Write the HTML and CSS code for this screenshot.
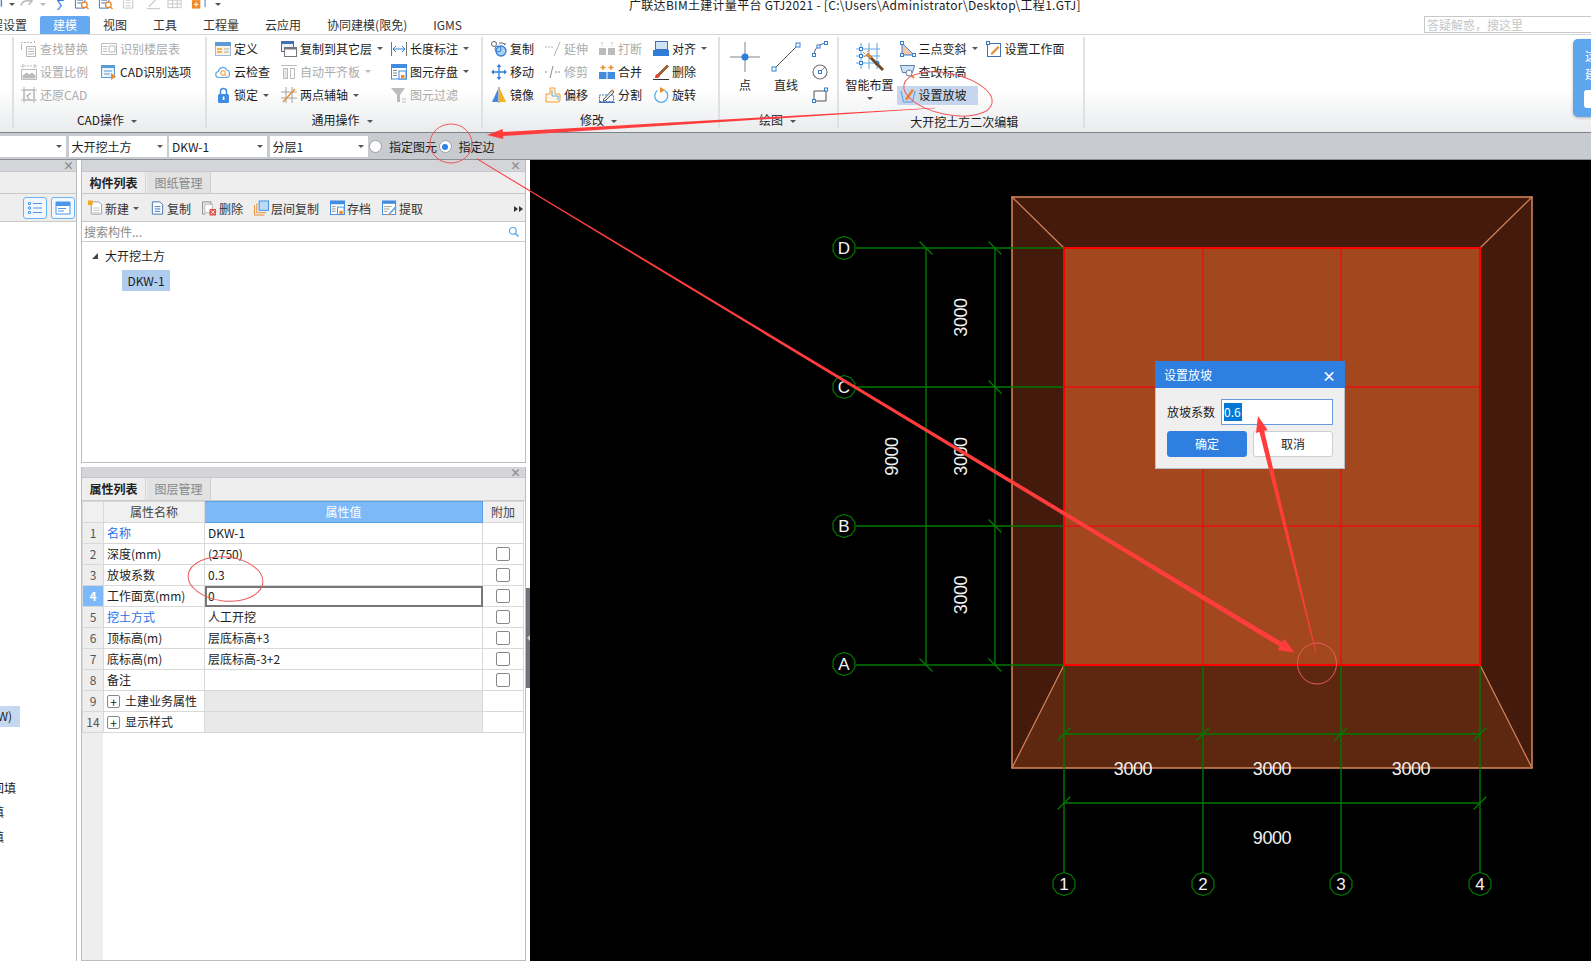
FILE: index.html
```html
<!DOCTYPE html>
<html lang="zh-CN">
<head>
<meta charset="utf-8">
<title>GTJ2021</title>
<link rel="stylesheet" href="styles.css">
</head>
<body>
<svg class="defs" width="0" height="0" aria-hidden="true">
  <symbol id="i-undo" viewBox="0 0 16 16"><path d="M8 2C2 4 2 12 8 14" fill="none" stroke="#3f8ad8" stroke-width="2"/><path d="M10 4v9" stroke="#3f8ad8" stroke-width="1.500"/></symbol>
  <symbol id="i-redo" viewBox="0 0 16 16"><path d="M1 12c1-5 6-6 11-5M9 3l4 4-4 4" fill="none" stroke="#b9b9b9" stroke-width="1.500"/></symbol>
  <symbol id="i-calc" viewBox="0 0 16 16"><path d="M1.500 1.500h10v13h-10z" fill="#fff" stroke="#3f6fb5"/><path d="M3.500 6h6M3.500 9h4" stroke="#3f6fb5"/><circle cx="11" cy="11" r="3" fill="#fff" stroke="#e8872b" stroke-width="1.400"/><path d="M13 13l2.500 2.500" stroke="#e8872b" stroke-width="1.500"/></symbol>
  <symbol id="i-qgray" viewBox="0 0 16 16"><path d="M1.500 1.500h10v13h-10zM4 6h5M4 9h5M4 12h5" fill="none" stroke="#c4c4c4"/></symbol>
  <symbol id="i-qpen" viewBox="0 0 16 16"><path d="M3 13L13 3M1 15h14" fill="none" stroke="#cfcfcf" stroke-width="1.400"/></symbol>
  <symbol id="i-qgrid" viewBox="0 0 16 16"><path d="M1 2h14v12H1zM1 6h14M1 10h14M6 2v12M11 2v12" fill="none" stroke="#c4c4c4"/></symbol>
  <symbol id="i-qadd" viewBox="0 0 16 16"><path d="M3 1.500h12v12" fill="none" stroke="#3f6fb5"/><rect x="1" y="6" width="9" height="9" fill="#f08a24"/><path d="M5.500 8v5M3 10.500h5" stroke="#fff"/></symbol>

  <symbol id="i-find" viewBox="0 0 16 16"><g fill="none" stroke="#b6b6b6"><path d="M0 1.500h11M13.500 0v3" stroke-dasharray="2 1"/><path d="M.5 3v6M5.500 5.500h9v10h-9zM7 8h6M7 10.500h6M7 13h6"/></g></symbol>
  <symbol id="i-floor" viewBox="0 0 16 16"><g fill="none" stroke="#bcbcbc"><path d="M.5 2.500h15v11H.5zM2 5.500h4M2 8h4M2 10.500h4"/><path d="M8 5h6v6H8z"/></g></symbol>
  <symbol id="i-scale" viewBox="0 0 16 16"><path d="M0 2h16" stroke="#bcbcbc" stroke-dasharray="2 1"/><path d="M2 0v4M14 0v4" stroke="#bcbcbc"/><path d="M.5 5.500h15v10H.5z" fill="none" stroke="#bcbcbc"/><path d="M1.500 14.500v-3l4-3 3 2 2.500-2 3.500 3v3z" fill="#bcbcbc"/></symbol>
  <symbol id="i-cad" viewBox="0 0 16 16"><path d="M.5 1.500h13v12H.5z" fill="#eaf3fc" stroke="#5b9bd5"/><rect y="1" width="14" height="3" fill="#5b9bd5"/><path d="M3 7h8M3 10h6" stroke="#5b9bd5"/><path d="M10 9l5 3.500-5 3.500z" fill="#f08a24"/></symbol>
  <symbol id="i-restore" viewBox="0 0 16 16"><g fill="none" stroke="#b6b6b6"><path d="M3 3h10v10H3zM0 3h16M3 0v16M13 0v16M0 13h16"/><path d="M10 6L6 9l2 3" stroke-width="1.300"/></g></symbol>
  <symbol id="i-def" viewBox="0 0 16 16"><rect x=".5" y="1.500" width="15" height="13" fill="#fdf3e2" stroke="#9db8d8"/><rect y="1" width="16" height="4" fill="#5b9bd5"/><path d="M2 8h5M2 11h5" stroke="#f0a030" stroke-width="1.500"/><path d="M9 8h5M9 11h5" stroke="#a9a9a9"/></symbol>
  <symbol id="i-cloud" viewBox="0 0 16 16"><path d="M4 13.500C0 13.500-.5 8 3.500 7.500 4 3 10 2 11.500 6c3.500 0 4.500 7.500 0 7.500z" fill="#fff" stroke="#5aa7e8" stroke-width="1.200"/><circle cx="8" cy="9" r="2.300" fill="none" stroke="#f08a24"/><path d="M9.500 10.500l2 2" stroke="#f08a24"/></symbol>
  <symbol id="i-lock" viewBox="0 0 16 16"><rect x="3" y="7" width="11" height="9" rx="1.500" fill="#3f8ce0"/><path d="M5.500 7V4.500a3 3 0 0 1 6 0V7" fill="none" stroke="#3f8ce0" stroke-width="1.500"/><rect x="7.800" y="9.500" width="1.600" height="3.500" fill="#fff"/></symbol>
  <symbol id="i-copyto" viewBox="0 0 16 16"><rect x=".5" y=".5" width="12" height="10" fill="#eaf3fc" stroke="#3f6fb5"/><rect width="13" height="3" fill="#3f6fb5"/><rect x="3.500" y="6.500" width="12" height="9" fill="#fff" stroke="#777"/><rect x="3" y="6" width="13" height="2.500" fill="#777"/></symbol>
  <symbol id="i-flat" viewBox="0 0 16 16"><path d="M0 1.500h16" stroke="#bcbcbc"/><rect x="2.500" y="4.500" width="4" height="10" fill="#e6e6e6" stroke="#bcbcbc"/><rect x="9.500" y="4.500" width="4" height="10" fill="#fff" stroke="#bcbcbc"/></symbol>
  <symbol id="i-axis" viewBox="0 0 16 16"><path d="M0 5h16M0 11h16M5 0v16M11 0v16" stroke="#9a9a9a" stroke-width=".9"/><path d="M2 15L14 2" stroke="#e8872b" stroke-width="1.300"/></symbol>
  <symbol id="i-len" viewBox="0 0 16 16"><path d="M.5 1v14M15.500 1v14" stroke="#777"/><path d="M2 8h12" stroke="#2f7fd8"/><path d="M5 5L2 8l3 3M11 5l3 3-3 3" fill="none" stroke="#2f7fd8"/></symbol>
  <symbol id="i-save" viewBox="0 0 16 16"><rect x=".5" y="1" width="15" height="14" fill="#fff" stroke="#3f8ce0"/><rect width="16" height="4" fill="#3f8ce0"/><path d="M2 6.500h4M2 9h4M2 11.500h4" stroke="#888"/><rect x="8" y="7" width="7" height="8" fill="#fff" stroke="#3f8ce0"/><rect x="10" y="11" width="3.500" height="3.500" fill="#f08a24"/></symbol>
  <symbol id="i-filter" viewBox="0 0 16 16"><path d="M0 1h14L9 8v7H6V8z" fill="#bcbcbc"/><path d="M11 12h4M11 15h4" stroke="#bcbcbc"/></symbol>
  <symbol id="i-copy" viewBox="0 0 16 16"><circle cx="3" cy="3" r="2.500" fill="#fff" stroke="#666"/><path d="M8 2h4l2 2M14 2v2" fill="none" stroke="#666"/><circle cx="10" cy="10" r="5" fill="#a9d0f2" stroke="#2f7fd8" stroke-width="1.300"/><circle cx="7" cy="8" r="3" fill="none" stroke="#2f7fd8"/></symbol>
  <symbol id="i-extend" viewBox="0 0 16 16"><path d="M0 6h8" stroke="#b6b6b6" stroke-dasharray="2 1"/><path d="M9 15L15 1" stroke="#b6b6b6"/></symbol>
  <symbol id="i-break" viewBox="0 0 16 16"><path d="M3 1v4M13 1v4" stroke="#bbb" stroke-dasharray="2 1"/><rect y="7" width="7" height="7" fill="#bbb"/><rect x="9" y="7" width="7" height="7" fill="#bbb"/></symbol>
  <symbol id="i-align" viewBox="0 0 16 16"><rect x="2.500" y=".5" width="12" height="8" fill="#cfe3f8" stroke="#3f6fb5"/><rect y="9" width="16" height="6" fill="#2f7fd8"/></symbol>
  <symbol id="i-move" viewBox="0 0 16 16"><path d="M8 3v10M3 8h10" stroke="#2f7fd8" stroke-width="1.300"/><path d="M8 0l2.500 3h-5zM8 16l2.500-3h-5zM0 8l3-2.500v5zM16 8l-3-2.500v5z" fill="#2f7fd8"/></symbol>
  <symbol id="i-trim" viewBox="0 0 16 16"><path d="M5 14L8 2" stroke="#8a8a8a"/><path d="M0 8h3M10 8h6" stroke="#8a8a8a" stroke-dasharray="2 1"/></symbol>
  <symbol id="i-merge" viewBox="0 0 16 16"><path d="M4 1v5M1.500 3.500h5M12 1v5M9.500 3.500h5" stroke="#f08a24" stroke-width="1.300"/><rect y="8" width="7.500" height="7" fill="#3f8ce0"/><rect x="8.500" y="8" width="7.500" height="7" fill="#3f8ce0"/></symbol>
  <symbol id="i-del" viewBox="0 0 16 16"><path d="M5 10L14 1l1.500 1.500-9 9z" fill="#a8642c" stroke="#6e3f18" stroke-width=".7"/><path d="M2 14c0-3 1.500-4.500 3.500-4l1.500 1.500c0 2-2 2.500-5 2.500z" fill="#d9472b"/><path d="M0 15.500h16" stroke="#333"/></symbol>
  <symbol id="i-mirror" viewBox="0 0 16 16"><path d="M7 2L1 15h6z" fill="#3f8ce0"/><path d="M9 2l6 13H9z" fill="#f5b21a"/><path d="M8 0v16" stroke="#777"/></symbol>
  <symbol id="i-offset" viewBox="0 0 16 16"><path d="M5 1h5v6h5v6a2 2 0 0 1-2 2H1v-8h4z" fill="#fdf6e6" stroke="#f0a030"/><path d="M7 3v6h6v4" fill="none" stroke="#5aa7e8"/></symbol>
  <symbol id="i-split" viewBox="0 0 16 16"><path d="M.5 14.500V8h14v6.500z" fill="none" stroke="#3f6fb5" stroke-dasharray="2 1"/><path d="M0 15.500h16" stroke="#3f6fb5"/><path d="M4 13L13 3l2 2-9 9z" fill="#e9e9e9" stroke="#555"/><path d="M12 4l1-2 2 2-2 1z" fill="#e8872b"/></symbol>
  <symbol id="i-rotate" viewBox="0 0 16 16"><path d="M4.500 3.500a6.500 6.500 0 1 0 7-.3" fill="none" stroke="#5aa7e8" stroke-width="1.300"/><path d="M7 0l5 3-5 3z" fill="#f08a24"/></symbol>
  <symbol id="i-point" viewBox="0 0 30 30"><path d="M15 0v30M0 15h30" stroke="#7a8795"/><circle cx="15" cy="15" r="3.500" fill="#2f7fd8"/></symbol>
  <symbol id="i-line" viewBox="0 0 30 30"><path d="M3 27L27 3" stroke="#555"/><rect x="1" y="25" width="4" height="4" fill="#fff" stroke="#2f7fd8"/><rect x="25" y="1" width="4" height="4" fill="#fff" stroke="#2f7fd8"/></symbol>
  <symbol id="i-arc" viewBox="0 0 16 16"><path d="M2 14C2 8 7 3 14 2" fill="none" stroke="#555"/><rect x=".5" y="12.500" width="3" height="3" fill="#fff" stroke="#2f7fd8"/><rect x="12.500" y=".5" width="3" height="3" fill="#fff" stroke="#2f7fd8"/><rect x="5" y="4" width="3" height="3" fill="#fff" stroke="#2f7fd8"/></symbol>
  <symbol id="i-circle" viewBox="0 0 16 16"><circle cx="8" cy="8" r="7" fill="#fff" stroke="#777" stroke-width="1.200"/><rect x="6.500" y="6.500" width="3" height="3" fill="#fff" stroke="#2f7fd8"/><path d="M9 7l4-4" stroke="#777"/></symbol>
  <symbol id="i-rect" viewBox="0 0 16 16"><path d="M2 4h12v10H2z" fill="none" stroke="#555"/><rect x="12.500" y="1" width="3" height="3" fill="#fff" stroke="#2f7fd8"/><rect x=".5" y="12.500" width="3" height="3" fill="#fff" stroke="#2f7fd8"/></symbol>
  <symbol id="i-smart" viewBox="0 0 30 30"><path d="M1 7h24M1 14h24M1 21h24M6 1v26M14 1v26M22 1v26" stroke="#5aa7e8"/><g fill="#fff" stroke="#2f7fd8"><rect x="4.500" y="5.500" width="3" height="3"/><rect x="4.500" y="12.500" width="3" height="3"/><rect x="4.500" y="19.500" width="3" height="3"/><rect x="20.500" y="19.500" width="3" height="3"/></g><path d="M12 12l16 16" stroke="#6b4a2a" stroke-width="3"/><path d="M12 12l4 4" stroke="#e8872b" stroke-width="3"/><path d="M8 10l2 2M14 8l-2 2M9 15l2-2" stroke="#e8872b"/></symbol>
  <symbol id="i-slope3" viewBox="0 0 16 16"><path d="M2 2v12h12z" fill="#f6c6a6" stroke="#2f7fd8"/><rect x=".5" y=".5" width="3" height="3" fill="#fff" stroke="#2f7fd8"/><rect x=".5" y="12.500" width="3" height="3" fill="#fff" stroke="#2f7fd8"/><rect x="12.500" y="12.500" width="3" height="3" fill="#fff" stroke="#2f7fd8"/></symbol>
  <symbol id="i-plane" viewBox="0 0 16 16"><rect x="1.500" y="2.500" width="13" height="13" fill="#fff" stroke="#3f6fb5"/><rect x=".5" y=".5" width="3" height="3" fill="#fff" stroke="#3f6fb5"/><path d="M5 12l7-7 1.500 1.500-7 7H5z" fill="#e8872b"/></symbol>
  <symbol id="i-level" viewBox="0 0 16 16"><path d="M.5 1.500h14l-2 7h-10z" fill="#cfe3f8" stroke="#5b7fa8"/><circle cx="9" cy="9" r="3" fill="#fff" stroke="#5b7fa8"/><path d="M11 11l3 3" stroke="#f08a24" stroke-width="2"/></symbol>
  <symbol id="i-slope" viewBox="0 0 16 16"><path d="M1 4l2.500 11h9L15 4" fill="none" stroke="#5b9bd5"/><path d="M5 12L12 2l2 1.500-7 10z" fill="#e8872b"/></symbol>
  <symbol id="i-new" viewBox="0 0 16 16"><path d="M3.500 1.500h8l3 3v10h-11z" fill="#fff" stroke="#9a9a9a"/><path d="M5.500 8h7M5.500 10.500h7M5.500 13h7" stroke="#c4c4c4"/><rect width="5" height="5" fill="#f5a623"/></symbol>
  <symbol id="i-cpy" viewBox="0 0 16 16"><path d="M2.500 1.500h8l3 3v10h-11z" fill="#fff" stroke="#3f6fb5"/><path d="M5 6.500h6M5 9h6M5 11.500h6" stroke="#3f6fb5"/></symbol>
  <symbol id="i-rm" viewBox="0 0 16 16"><path d="M3.500 14.500h-3v-13h9V7" fill="none" stroke="#8a8a8a"/><rect x="3" y="4" width="8" height="9" fill="#fff" stroke="#b5b5b5"/><rect x="8" y="9" width="7" height="7" fill="#e2504a"/><path d="M9.500 10.500l4 4M13.500 10.500l-4 4" stroke="#fff"/></symbol>
  <symbol id="i-lcopy" viewBox="0 0 16 16"><path d="M.5 5v10.500H11M3 3v10h10" fill="none" stroke="#e8872b"/><rect x="5.500" y=".5" width="10" height="10" fill="#bcd9f6" stroke="#3f8ce0"/></symbol>
  <symbol id="i-pull" viewBox="0 0 16 16"><rect x=".5" y="1" width="14" height="14" fill="#fff" stroke="#3f8ce0"/><rect width="15" height="3.500" fill="#3f8ce0"/><path d="M2 6.500h8M2 9h6M2 11.500h4" stroke="#999"/><path d="M7 14l7-8 1.500 1.500-7 7.500z" fill="#5aa7e8"/><path d="M5 15h5" stroke="#e8872b"/></symbol>
  <symbol id="i-search" viewBox="0 0 16 16"><circle cx="6.500" cy="6.500" r="4.500" fill="none" stroke="#5aa7e8" stroke-width="1.600"/><path d="M10 10l4 4" stroke="#5aa7e8" stroke-width="2"/></symbol>
  <symbol id="i-listv" viewBox="0 0 16 16"><path d="M1.500 2.500h2v2h-2zM1.500 7h2v2h-2zM1.500 11.500h2v2h-2z" fill="none" stroke="#4a97e8"/><path d="M6 3.500h9M6 8h9M6 12.500h9" stroke="#4a97e8"/></symbol>
  <symbol id="i-formv" viewBox="0 0 16 16"><path d="M1 2h14v12H1z" fill="#fff" stroke="#4a97e8"/><rect x="1" y="2" width="14" height="4" fill="#4a97e8"/><path d="M3 8.500h8M3 11h6" stroke="#4a97e8"/></symbol>
  <symbol id="axis-bubble" viewBox="-12 -12 24 24"><polygon points="0,-11.500 6.760,-9.300 10.940,-3.550 10.940,3.550 6.760,9.300 0,11.500 -6.760,9.300 -10.940,3.550 -10.940,-3.550 -6.760,-9.300" fill="#000" stroke="#007a00" stroke-width="1.200"/></symbol>
</svg>

<header class="titlebar">
  <div class="quick">
    <svg class="q q-undo"><use href="#i-undo"/></svg><i class="qcaret"></i>
    <svg class="q q-redo"><use href="#i-redo"/></svg><i class="qcaret light"></i>
    <span class="sigma">Σ</span>
    <svg class="q"><use href="#i-calc"/></svg>
    <svg class="q"><use href="#i-calc"/></svg>
    <svg class="q"><use href="#i-qgray"/></svg>
    <svg class="q q-tight"><use href="#i-qpen"/></svg>
    <svg class="q"><use href="#i-qgrid"/></svg>
    <svg class="q"><use href="#i-qadd"/></svg>
    <i class="qcaret"></i>
  </div>
  <div class="apptitle">广联达BIM土建计量平台 GTJ2021 - [C:\Users\Administrator\Desktop\工程1.GTJ]</div>
</header>

<nav class="tabbar">
  <span class="mtab first">工程设置</span>
  <span class="mtab on">建模</span>
  <span class="mtab">视图</span>
  <span class="mtab">工具</span>
  <span class="mtab">工程量</span>
  <span class="mtab">云应用</span>
  <span class="mtab">协同建模(限免)</span>
  <span class="mtab">IGMS</span>
  <div class="helpbox">答疑解惑，搜这里</div>
</nav>

<section class="ribbon">
  <div class="group g-cad">
    <div class="cols">
      <div class="col">
        <div class="item off"><svg class="ic"><use href="#i-find"/></svg>查找替换</div>
        <div class="item off"><svg class="ic"><use href="#i-scale"/></svg>设置比例</div>
        <div class="item off"><svg class="ic"><use href="#i-restore"/></svg>还原CAD</div>
      </div>
      <div class="col">
        <div class="item off"><svg class="ic"><use href="#i-floor"/></svg>识别楼层表</div>
        <div class="item"><svg class="ic"><use href="#i-cad"/></svg>CAD识别选项</div>
      </div>
    </div>
    <div class="glabel">CAD操作<i class="caret"></i></div>
  </div>
  <div class="group g-common">
    <div class="cols">
      <div class="col">
        <div class="item"><svg class="ic"><use href="#i-def"/></svg>定义</div>
        <div class="item"><svg class="ic"><use href="#i-cloud"/></svg>云检查</div>
        <div class="item"><svg class="ic"><use href="#i-lock"/></svg>锁定<i class="caret"></i></div>
      </div>
      <div class="col">
        <div class="item"><svg class="ic"><use href="#i-copyto"/></svg>复制到其它层<i class="caret"></i></div>
        <div class="item off"><svg class="ic"><use href="#i-flat"/></svg>自动平齐板<i class="caret"></i></div>
        <div class="item"><svg class="ic"><use href="#i-axis"/></svg>两点辅轴<i class="caret"></i></div>
      </div>
      <div class="col">
        <div class="item"><svg class="ic"><use href="#i-len"/></svg>长度标注<i class="caret"></i></div>
        <div class="item"><svg class="ic"><use href="#i-save"/></svg>图元存盘<i class="caret"></i></div>
        <div class="item off"><svg class="ic"><use href="#i-filter"/></svg>图元过滤</div>
      </div>
    </div>
    <div class="glabel">通用操作<i class="caret"></i></div>
  </div>
  <div class="group g-modify">
    <div class="cols">
      <div class="col">
        <div class="item"><svg class="ic"><use href="#i-copy"/></svg>复制</div>
        <div class="item"><svg class="ic"><use href="#i-move"/></svg>移动</div>
        <div class="item"><svg class="ic"><use href="#i-mirror"/></svg>镜像</div>
      </div>
      <div class="col">
        <div class="item off"><svg class="ic"><use href="#i-extend"/></svg>延伸</div>
        <div class="item off"><svg class="ic"><use href="#i-trim"/></svg>修剪</div>
        <div class="item"><svg class="ic"><use href="#i-offset"/></svg>偏移</div>
      </div>
      <div class="col">
        <div class="item off"><svg class="ic"><use href="#i-break"/></svg>打断</div>
        <div class="item"><svg class="ic"><use href="#i-merge"/></svg>合并</div>
        <div class="item"><svg class="ic"><use href="#i-split"/></svg>分割</div>
      </div>
      <div class="col">
        <div class="item"><svg class="ic"><use href="#i-align"/></svg>对齐<i class="caret"></i></div>
        <div class="item"><svg class="ic"><use href="#i-del"/></svg>删除</div>
        <div class="item"><svg class="ic"><use href="#i-rotate"/></svg>旋转</div>
      </div>
    </div>
    <div class="glabel">修改<i class="caret"></i></div>
  </div>
  <div class="group g-draw">
    <div class="cols">
      <div class="big"><svg class="bigic"><use href="#i-point"/></svg><span>点</span></div>
      <div class="big"><svg class="bigic"><use href="#i-line"/></svg><span>直线</span></div>
      <div class="col">
        <div class="item"><svg class="ic"><use href="#i-arc"/></svg></div>
        <div class="item"><svg class="ic"><use href="#i-circle"/></svg></div>
        <div class="item"><svg class="ic"><use href="#i-rect"/></svg></div>
      </div>
    </div>
    <div class="glabel">绘图<i class="caret"></i></div>
  </div>
  <div class="group g-edit">
    <div class="cols">
      <div class="big wide"><svg class="bigic"><use href="#i-smart"/></svg><span>智能布置</span><i class="caret"></i></div>
      <div class="col col-sel">
        <div class="item"><svg class="ic"><use href="#i-slope3"/></svg>三点变斜<i class="caret"></i></div>
        <div class="item"><svg class="ic"><use href="#i-level"/></svg>查改标高</div>
        <div class="item sel"><svg class="ic"><use href="#i-slope"/></svg>设置放坡</div>
      </div>
      <div class="col">
        <div class="item"><svg class="ic"><use href="#i-plane"/></svg>设置工作面</div>
      </div>
    </div>
    <div class="glabel low">大开挖土方二次编辑</div>
  </div>
  <aside class="promo">
    <span>这</span><span>建</span>
    <b class="promo-btn"></b>
  </aside>
</section>

<section class="optbar">
  <div class="combo c0"><i class="caret"></i></div>
  <div class="combo"><span>大开挖土方</span><i class="caret"></i></div>
  <div class="combo"><span>DKW-1</span><i class="caret"></i></div>
  <div class="combo"><span>分层1</span><i class="caret"></i></div>
  <label class="radio r1"><i class="dot"></i><span>指定图元</span></label>
  <label class="radio r2"><i class="dot on"></i><span>指定边</span></label>
</section>

<main class="main">
  <aside class="leftpane">
    <div class="ptitle"><b class="px">×</b></div>
    <div class="lband"></div>
    <div class="ltools">
      <span class="vbtn"><svg class="vic"><use href="#i-listv"/></svg></span>
      <span class="vbtn"><svg class="vic"><use href="#i-formv"/></svg></span>
    </div>
    <div class="llist">
      <div class="lrow hi"><span>大开挖土方(DKW)</span></div>
      <div class="lrow l2"><span>大开挖灰土回填</span></div>
      <div class="lrow l3"><span>基槽灰土回填</span></div>
      <div class="lrow l3"><span>基坑灰土回填</span></div>
    </div>
  </aside>

  <div class="midpane">
    <section class="panel upper">
      <div class="ptitle"><b class="px">×</b></div>
      <div class="ptabs"><span class="ptab on">构件列表</span><span class="ptab">图纸管理</span></div>
      <div class="ptools">
        <span class="tool"><svg class="tic"><use href="#i-new"/></svg>新建<i class="caret"></i></span>
        <span class="tool"><svg class="tic"><use href="#i-cpy"/></svg>复制</span>
        <span class="tool"><svg class="tic"><use href="#i-rm"/></svg>删除</span>
        <span class="tool"><svg class="tic"><use href="#i-lcopy"/></svg>层间复制</span>
        <span class="tool"><svg class="tic"><use href="#i-save"/></svg>存档</span>
        <span class="tool"><svg class="tic"><use href="#i-pull"/></svg>提取</span>
        <span class="more"></span>
      </div>
      <div class="psearch"><span>搜索构件...</span><svg class="sic"><use href="#i-search"/></svg></div>
      <div class="tree">
        <div class="tnode"><i class="tri"></i>大开挖土方</div>
        <div class="tleaf">DKW-1</div>
      </div>
    </section>
    <section class="panel lower">
      <div class="ptitle short"><b class="px">×</b></div>
      <div class="ptabs tall"><span class="ptab on">属性列表</span><span class="ptab">图层管理</span></div>
      <div class="propwrap">
        <table class="props">
          <colgroup><col class="c-n"><col class="c-k"><col class="c-v"><col class="c-a"></colgroup>
          <thead>
            <tr><th></th><th>属性名称</th><th class="hv">属性值</th><th>附加</th></tr>
          </thead>
          <tbody>
            <tr><td class="n">1</td><td class="k link">名称</td><td class="v">DKW-1</td><td class="a"></td></tr>
            <tr><td class="n">2</td><td class="k">深度(mm)</td><td class="v">(2750)</td><td class="a"><i class="chk"></i></td></tr>
            <tr><td class="n">3</td><td class="k">放坡系数</td><td class="v">0.3</td><td class="a"><i class="chk"></i></td></tr>
            <tr><td class="n act">4</td><td class="k">工作面宽(mm)</td><td class="v edit">0</td><td class="a"><i class="chk"></i></td></tr>
            <tr><td class="n">5</td><td class="k link">挖土方式</td><td class="v">人工开挖</td><td class="a"><i class="chk"></i></td></tr>
            <tr><td class="n">6</td><td class="k">顶标高(m)</td><td class="v">层底标高+3</td><td class="a"><i class="chk"></i></td></tr>
            <tr><td class="n">7</td><td class="k">底标高(m)</td><td class="v">层底标高-3+2</td><td class="a"><i class="chk"></i></td></tr>
            <tr><td class="n">8</td><td class="k">备注</td><td class="v"></td><td class="a"><i class="chk"></i></td></tr>
            <tr><td class="n">9</td><td class="k"><span class="grp"><i class="plus">+</i>土建业务属性</span></td><td class="v shade"></td><td class="a"></td></tr>
            <tr><td class="n">14</td><td class="k"><span class="grp"><i class="plus">+</i>显示样式</span></td><td class="v shade"></td><td class="a"></td></tr>
          </tbody>
        </table>
      </div>
    </section>
  </div>

  <div class="splitter"><span class="thumb"></span></div>

  <div class="viewport">
    <svg class="drawing" viewBox="530 160 1061 801">
      <rect x="1012" y="197" width="520" height="571" fill="#431a0c"/>
      <polygon points="1012,768 1532,768 1480,665 1064,665" fill="#5e2810"/>
      <rect x="1064" y="248" width="416" height="417" fill="#a3481e"/>
      <path d="M1012 197L1064 248M1532 197L1480 248M1012 768L1064 665M1532 768L1480 665" stroke="#d08058" stroke-width="1.300" fill="none"/>
      <rect x="1012" y="197" width="520" height="571" fill="none" stroke="#d08058" stroke-width="1.600"/>
      <g stroke="#007a00" stroke-width="1.400" fill="none">
        <path d="M856 248H1064M856 387H1064M856 526H1064M856 665H1064"/>
        <path d="M1064 665V872M1203 665V872M1341 665V872M1480 665V872"/>
        <path d="M926 248V665M995 248V665"/>
        <path d="M919.500 241.500L932.500 254.500M919.500 658.500L932.500 671.500"/>
        <path d="M988.500 241.500L1001.500 254.500M988.500 380.500L1001.500 393.500M988.500 519.500L1001.500 532.500M988.500 658.500L1001.500 671.500"/>
        <path d="M1064 734H1480M1064 803H1480"/>
        <path d="M1057.500 740.500L1070.500 727.500M1196.500 740.500L1209.500 727.500M1334.500 740.500L1347.500 727.500M1473.500 740.500L1486.500 727.500"/>
        <path d="M1057.500 809.500L1070.500 796.500M1473.500 809.500L1486.500 796.500"/>
      </g>
      <g stroke="#e81010" stroke-width="1.400" fill="none">
        <path d="M1064 387H1480M1064 526H1480M1203 248V665M1341 248V665"/>
      </g>
      <rect x="1064" y="248" width="416" height="417" fill="none" stroke="#ff0000" stroke-width="2"/>
      <use href="#axis-bubble" x="832" y="236" width="24" height="24"/>
      <use href="#axis-bubble" x="832" y="375" width="24" height="24"/>
      <use href="#axis-bubble" x="832" y="514" width="24" height="24"/>
      <use href="#axis-bubble" x="832" y="652" width="24" height="24"/>
      <use href="#axis-bubble" x="1052" y="872" width="24" height="24"/>
      <use href="#axis-bubble" x="1191" y="872" width="24" height="24"/>
      <use href="#axis-bubble" x="1329" y="872" width="24" height="24"/>
      <use href="#axis-bubble" x="1468" y="872" width="24" height="24"/>
      <g class="cadtext bubble">
        <text x="844" y="254">D</text>
        <text x="844" y="393">C</text>
        <text x="844" y="532">B</text>
        <text x="844" y="670">A</text>
        <text x="1064" y="890">1</text>
        <text x="1203" y="890">2</text>
        <text x="1341" y="890">3</text>
        <text x="1480" y="890">4</text>
      </g>
      <g class="cadtext">
        <text x="1133" y="775">3000</text>
        <text x="1272" y="775">3000</text>
        <text x="1411" y="775">3000</text>
        <text x="1272" y="844">9000</text>
        <text transform="translate(967 317.500) rotate(-90)">3000</text>
        <text transform="translate(967 456.500) rotate(-90)">3000</text>
        <text transform="translate(967 595) rotate(-90)">3000</text>
        <text transform="translate(898 456.500) rotate(-90)">9000</text>
      </g>
    </svg>
    <div class="dialog">
      <div class="dtitle"><span>设置放坡</span><b>×</b></div>
      <div class="dbody">
        <div class="dfield"><span>放坡系数</span><div class="dinput"><span class="seltext">0.6</span></div></div>
        <div class="dbtns"><span class="dbtn ok">确定</span><span class="dbtn">取消</span></div>
      </div>
    </div>
  </div>
</main>

<svg class="marks" width="1591" height="961" viewBox="0 0 1591 961">
  <g fill="none" stroke="#ee5a5a" stroke-width="1">
    <ellipse cx="451" cy="143.500" rx="21" ry="19.500"/>
    <ellipse cx="948" cy="94" rx="45" ry="20.500" transform="rotate(12 948 94)"/>
    <ellipse cx="225.500" cy="579" rx="37.500" ry="22" transform="rotate(6 225.500 579)"/>
    <ellipse cx="1317" cy="663.500" rx="19.500" ry="20.500"/>
  </g>
  <g fill="#ff3d3d">
    <polygon points="477,158.300 1282.200,642.300 1284.300,638.800 1294.600,652.700 1277.500,650 1279.600,646.500 476.400,159.100"/>
    <polygon points="935,107.700 502.900,132 502.700,129 487,135 503.300,139 503.100,136 935,108.300"/>
    <polygon points="1316.400,652.900 1264.200,430.900 1267.600,430.100 1258,416 1256,432.900 1259.400,432.100 1315.600,653.100"/>
  </g>
</svg>
</body>
</html>
```

FILE: styles.css
```css
* { box-sizing: border-box; }
html, body { margin: 0; padding: 0; }
body {
  position: relative;
  width: 1591px;
  height: 961px;
  overflow: hidden;
  background: #fff;
  color: #1c1c1c;
  font: 12px/16px "Noto Sans CJK SC", "Noto Sans", sans-serif;
  display: flex;
  flex-direction: column;
}
i, b { font-style: normal; }
.defs { position: absolute; }

/* title */
.titlebar { height: 16px; flex: none; display: flex; overflow: hidden; }
.quick { width: 629px; flex: none; display: flex; align-items: flex-start; height: 10px; overflow: hidden; }
.q { width: 15px; height: 16px; flex: none; margin: -6px 9px 0 0; }
.q-tight { margin-right: 6px; }
.q-undo { margin-left: -8px; margin-right: 2px; }
.q-redo { margin-left: 5px; margin-right: 5px; }
.qcaret { width: 0; height: 0; border: 3.500px solid transparent; border-top: 3.500px solid #555; border-bottom: 0; margin: 3px 0 0 0; flex: none; }
.qcaret.light { border-top-color: #b9b9b9; }
.sigma { width: 15px; flex: none; margin: 0 6px 0 7px; font-size: 14px; line-height: 10px; color: #2f7fd8; text-align: center; }
.apptitle { font-size: 12px; line-height: 10px; white-space: nowrap; letter-spacing: .025em; }

/* main tabs */
.tabbar { height: 19px; flex: none; display: flex; align-items: flex-start; border-bottom: 1px solid #d6d6d6; }
.mtab { height: 18px; padding: 0 13px; line-height: 18px; color: #333; flex: none; }
.mtab.first { margin-left: -34px; }
.mtab.on { background: #64a9f2; color: #fff; width: 50px; border-radius: 2px 2px 0 0; }
.helpbox { margin-left: auto; width: 175px; margin-right: -8px; height: 17px; border: 1px solid #c8c8c8; color: #c6c6c6; padding-left: 2px; line-height: 15px; }

/* ribbon */
.ribbon {
  height: 97px; flex: none; display: flex; padding: 2px 0 0 12px;
  position: relative;
  background: linear-gradient(#fff 0, #fff 56%, #e9ebed 100%);
}
.group { height: 91px; border-left: 2px solid #dfe1e3; display: flex; flex-direction: column; flex: none; }
.g-cad { width: 193px; padding-left: 7px; }
.g-common { width: 276px; padding-left: 8px; }
.g-modify { width: 237px; padding-left: 8px; }
.g-draw { width: 119px; padding-left: 10px; }
.g-edit { width: 248px; padding-left: 6.500px; border-right: 2px solid #dfe1e3; }
.cols { display: flex; height: 70.500px; flex: none; }
.g-cad .cols { gap: 13px; }
.g-common .cols { gap: 11px; }
.g-common .col:nth-child(2) { margin-right: -3px; }
.g-modify .cols { gap: 11px; }
.g-draw .cols { gap: 11px; }
.g-edit .cols { gap: 3px; }
.g-edit .col + .col { margin-left: 5px; }
.col { display: flex; flex-direction: column; }
.item { height: 23.250px; display: flex; align-items: center; white-space: nowrap; }
.item.off { color: #ababab; }
.ic { width: 16px; height: 16px; flex: none; margin-right: 3px; }
.g-draw .col .ic { margin-right: 0; }
.item.sel { background: #c5d6ee; height: 19px; margin: 2.250px 0; }
.col-sel { width: 81px; }
.col-sel .item { padding-left: 3px; }
.big { width: 30px; padding-top: 5px; display: flex; flex-direction: column; align-items: center; white-space: nowrap; }
.big span { margin-top: 4px; line-height: 18px; }
.bigic { width: 30px; height: 30px; flex: none; }
.big.wide { width: 48px; }
.big .caret { margin: 3px 0 0; }
.caret { display: inline-block; width: 0; height: 0; border: 3.500px solid transparent; border-top: 3.500px solid #555; border-bottom: 0; margin-left: 5px; flex: none; vertical-align: middle; }
.item.off .caret { border-top-color: #bbb; }
.glabel { margin-top: 3px; height: 18px; line-height: 18px; text-align: center; padding-right: 12px; }
.glabel .caret { margin-left: 7px; }
.glabel.low { margin-top: 5px; padding-right: 0; }
.promo {
  position: absolute; left: 1573px; top: 4px; width: 30px; height: 78px;
  background: #5fa5ee; border-radius: 5px; box-shadow: 0 1px 3px rgba(0,0,0,.25);
  color: #fff; padding: 8px 0 0 12px; display: flex; flex-direction: column; line-height: 18px;
}
.promo-btn { width: 20px; height: 18px; background: #fff; border-radius: 3px; margin: 7px 0 0 -1px; }

/* option bar */
.optbar {
  height: 28px; flex: none; display: flex; align-items: flex-start;
  gap: 2.500px; padding-top: 3px;
  background: #c8cbcf; border-top: 1px solid #7f8389; border-bottom: 1px solid #8b8f95;
}
.combo { width: 98px; height: 21px; background: #fff; display: flex; align-items: center; justify-content: space-between; padding: 0 4px 0 3px; flex: none; }
.combo.c0 { width: 66px; justify-content: flex-end; }
.radio { display: flex; align-items: center; height: 21px; gap: 7px; flex: none; white-space: nowrap; }
.r1 { margin-left: -1px; }
.r2 { margin-left: -1px; }
.dot { width: 13px; height: 13px; border-radius: 50%; background: #fff; border: 1px solid #a0a0a0; flex: none; display: flex; align-items: center; justify-content: center; }
.dot.on::after { content: ""; width: 6px; height: 6px; border-radius: 50%; background: #2f7fe8; }

/* main */
.main { flex: 1; display: flex; min-height: 0; }
.leftpane { width: 77px; flex: none; border-right: 1px solid #bdbdbd; overflow: hidden; }
.ptitle { height: 12px; background: #d3d5d9; display: flex; justify-content: flex-end; align-items: center; padding-right: 4px; border-bottom: 1px solid #c6c8cc; }
.leftpane .ptitle { padding-right: 2px; }
.px { color: #888; font-size: 11px; line-height: 11px; font-weight: 700; }
.lband { height: 22px; background: #eee; border-bottom: 1px solid #c9c9c9; }
.ltools { height: 28px; background: #eee; border-bottom: 1px solid #c9c9c9; display: flex; justify-content: flex-end; align-items: center; gap: 4px; padding-right: 1px; }
.vbtn { width: 24px; height: 22px; border: 1px solid #6cb2f5; border-radius: 3px; background: #f3f8fe; display: flex; align-items: center; justify-content: center; }
.vic { width: 16px; height: 16px; }
.llist { padding-top: 484px; }
.lrow { height: 24.500px; display: flex; justify-content: flex-end; align-items: center; white-space: nowrap; line-height: 20px; }
.lrow.hi { width: 20px; height: 20.700px; padding-right: 8px; background: #c6d8f0; margin-bottom: 49px; }
.lrow.l2 { width: 16px; }
.lrow.l3 { width: 4px; }
.lrow span { flex: none; }

.midpane { width: 445px; margin-left: 4px; flex: none; display: flex; flex-direction: column; gap: 4px; }
.panel { border: 1px solid #bdbdbd; border-top: 0; display: flex; flex-direction: column; min-height: 0; }
.upper { height: 303px; flex: none; }
.lower { flex: 1; }
.ptitle.short { height: 11px; }
.ptabs { height: 22px; flex: none; background: #eee; display: flex; border-bottom: 1px solid #c9c9c9; gap: 1px; }
.ptabs.tall { height: 23px; }
.ptab { width: 64px; text-align: center; line-height: 22px; color: #888; background: #e2e2e2; border-right: 1px solid #cfcfcf; }
.ptab.on { color: #222; background: #eee; font-weight: 700; border-right: 1px solid #d6d6d6; }
.ptools { height: 28px; flex: none; background: #eee; border-bottom: 1px solid #c9c9c9; display: flex; align-items: center; gap: 11px; padding: 2px 0 0 6px; position: relative; }
.tool { display: flex; align-items: center; gap: 2px; white-space: nowrap; color: #333; }
.tic { width: 15px; height: 16px; flex: none; margin-top: -1px; }
.tool .caret { margin-left: 2px; }
.more { margin-left: auto; margin-right: 2px; display: flex; gap: 1px; }
.more::before, .more::after { content: ""; width: 0; height: 0; border: 3.500px solid transparent; border-left: 4px solid #333; border-right: 0; }
.psearch { height: 20px; flex: none; border-bottom: 1px solid #c9c9c9; display: flex; justify-content: space-between; align-items: center; padding: 0 5px 0 2px; color: #8a8a8a; }
.sic { width: 12px; height: 12px; }
.tree { flex: 1; padding-top: 3px; }
.tnode { height: 22px; display: flex; align-items: center; padding-left: 10px; }
.tri { width: 0; height: 0; border-style: solid; border-width: 0 0 6px 6px; border-color: transparent transparent #444 transparent; margin-right: 7px; }
.tleaf { margin: 2.500px 0 0 40px; width: 48px; height: 21px; background: #b0ccee; line-height: 21px; text-align: center; }

.propwrap { flex: 1; background: linear-gradient(90deg, #eee 21px, #fff 21px); }
.props { border-collapse: collapse; table-layout: fixed; width: 441px; }
.c-n { width: 21px; }
.c-k { width: 101px; }
.c-v { width: 278px; }
.c-a { width: 41px; }
.props th, .props td { height: 21px; padding: 0; border: 1px solid #d8d8d8; font-weight: 400; line-height: 16px; white-space: nowrap; overflow: hidden; }
.props th { background: #f0f0f0; color: #444; text-align: center; }
.props th.hv { background: #7db8f8; color: #fff; border-color: #5ba0ea; }
.props .n { background: #eee; color: #555; text-align: center; }
.props .n.act { background: #7db8f8; color: #fff; font-weight: 700; }
.props .k { padding-left: 3px; background: #fff; color: #222; }
.props .k.link { color: #2a6fe8; }
.props .v { padding-left: 3px; background: #fff; color: #222; }
.props .v.shade { background: #e9e9e9; }
.props .v.edit { outline: 2px solid #777; outline-offset: -2px; }
.props .a { text-align: center; background: #fff; }
.chk { display: block; width: 14px; height: 14px; margin: 0 auto; border: 1px solid #888; border-radius: 2px; background: #fff; }
.grp { display: flex; align-items: center; gap: 5px; }
.plus { width: 13px; height: 13px; border: 1px solid #888; border-radius: 2px; display: flex; align-items: center; justify-content: center; line-height: 11px; font-size: 12px; }

.splitter { width: 4px; flex: none; padding-top: 428px; }
.thumb { display: flex; align-items: center; justify-content: center; width: 4px; height: 100px; background: #6e747c; }
.thumb::after { content: ""; width: 0; height: 0; border: 3px solid transparent; border-right: 3px solid #c8cbcf; border-left: 0; }

.viewport { flex: 1; background: #000; position: relative; overflow: hidden; }
.drawing { display: block; width: 100%; height: 100%; }
.cadtext text { fill: #f2f2f2; font: 18px "Liberation Sans", sans-serif; letter-spacing: -.4px; text-anchor: middle; }
.cadtext.bubble text { font-size: 17px; letter-spacing: 0; }

.dialog { position: absolute; left: 625px; top: 201px; width: 190px; height: 108px; background: #efefef; border: 1px solid #b9bfc8; border-top: 0; }
.dtitle { height: 27px; margin: 0 -1px; background: #2e7fe0; color: #fff; display: flex; justify-content: space-between; align-items: center; padding: 0 9px; }
.dtitle b { font-size: 14px; font-weight: 700; }
.dbody { padding: 11px 11px 0 11px; }
.dfield { display: flex; align-items: center; justify-content: space-between; }
.dinput { width: 112px; height: 26px; border: 1px solid #6a9be0; background: #fff; padding: 3px 2px; }
.seltext { display: block; width: 18px; height: 18px; background: #0078d7; color: #fff; line-height: 18px; }
.dbtns { display: flex; justify-content: space-between; margin-top: 6px; }
.dbtn { width: 80px; height: 26px; border-radius: 3px; background: #fff; border: 1px solid #cfcfcf; text-align: center; line-height: 24px; }
.dbtn.ok { background: #2e7fe0; border-color: #2e7fe0; color: #fff; }

.marks { position: absolute; left: 0; top: 0; pointer-events: none; }
```
